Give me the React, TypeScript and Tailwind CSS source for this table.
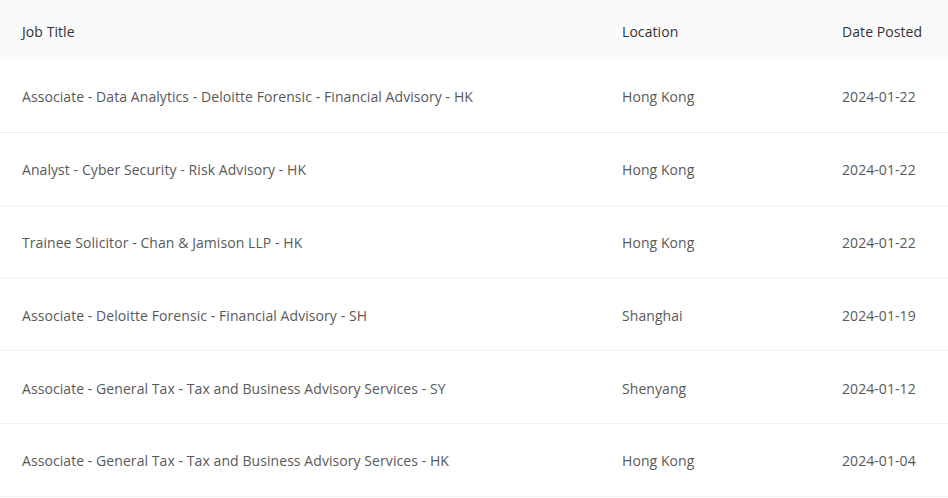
import React from 'react';

const JOBS = [
  ['Associate - Data Analytics - Deloitte Forensic - Financial Advisory - HK', 'Hong Kong', '2024-01-22'],
  ['Analyst - Cyber Security - Risk Advisory - HK', 'Hong Kong', '2024-01-22'],
  ['Trainee Solicitor - Chan & Jamison LLP - HK', 'Hong Kong', '2024-01-22'],
  ['Associate - Deloitte Forensic - Financial Advisory - SH', 'Shanghai', '2024-01-19'],
  ['Associate - General Tax - Tax and Business Advisory Services - SY', 'Shenyang', '2024-01-12'],
  ['Associate - General Tax - Tax and Business Advisory Services - HK', 'Hong Kong', '2024-01-04'],
];

export default function App() {
  return (
    <div className="w-[948px] h-[498px] bg-white overflow-hidden font-['Open_Sans',sans-serif] text-[14px] tracking-[0.07px]">
      <div className="grid grid-cols-[600px_220px_1fr] h-[60px] items-center pt-[2px] bg-[#fafafa] text-[#333]">
        <div className="pl-[22px]">Job Title</div>
        <div className="pl-[22px]">Location</div>
        <div className="pl-[22px]">Date Posted</div>
      </div>
      {JOBS.map(([title, loc, date]) => (
        <div key={title} className="grid grid-cols-[600px_220px_1fr] h-[72.8px] items-center pt-[2px] border-b border-[#f0f0f0] text-[#595959]">
          <div className="pl-[22px]">{title}</div>
          <div className="pl-[22px]">{loc}</div>
          <div className="pl-[22px]">{date}</div>
        </div>
      ))}
    </div>
  );
}
